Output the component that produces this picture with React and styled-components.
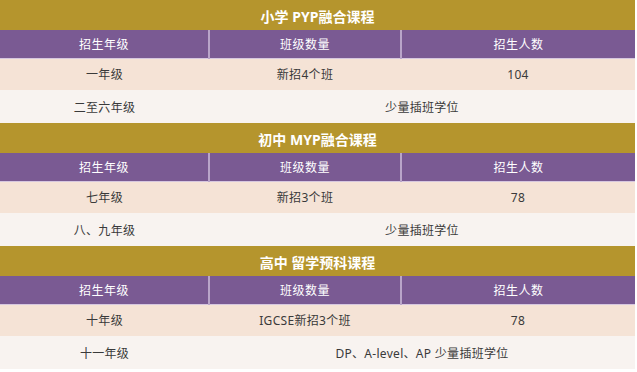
import styled, { createGlobalStyle } from 'styled-components'

const GlobalStyle = createGlobalStyle`
  html, body {
    margin: 0;
    padding: 0;
    background: #ffffff;
  }
  body {
    font-family: 'Noto Sans', 'Noto Sans CJK SC', sans-serif;
  }
`

const sections = [
  {
    title: '小学 PYP融合课程',
    main: ['一年级', '新招4个班', '104'],
    extra: ['二至六年级', '少量插班学位'],
  },
  {
    title: '初中 MYP融合课程',
    main: ['七年级', '新招3个班', '78'],
    extra: ['八、九年级', '少量插班学位'],
  },
  {
    title: '高中 留学预科课程',
    main: ['十年级', 'IGCSE新招3个班', '78'],
    extra: ['十一年级', 'DP、A-level、AP 少量插班学位'],
  },
]

const headers = ['招生年级', '班级数量', '招生人数']

function App() {
  return (
    <>
      <GlobalStyle />
      <Table>
        <colgroup>
          <col style={{ width: 209 }} />
          <col style={{ width: 192 }} />
          <col />
        </colgroup>
        {sections.map((s) => (
          <tbody key={s.title}>
            <TitleRow>
              <td colSpan={3}>{s.title}</td>
            </TitleRow>
            <HeadRow>
              {headers.map((h) => (
                <th key={h}>{h}</th>
              ))}
            </HeadRow>
            <BodyRow $tone='peach'>
              {s.main.map((c, i) => (
                <td key={i}>{c}</td>
              ))}
            </BodyRow>
            <BodyRow $tone='light' $tall>
              <td>{s.extra[0]}</td>
              <td colSpan={2}>{s.extra[1]}</td>
            </BodyRow>
          </tbody>
        ))}
      </Table>
    </>
  )
}

export default App

/////  Style  /////

const Table = styled.table`
  width: 635px;
  table-layout: fixed;
  border-collapse: collapse;
  border-spacing: 0;
  td,
  th {
    padding: 0;
    text-align: center;
    vertical-align: middle;
  }
`

const TitleRow = styled.tr`
  height: 30px;
  background-color: #b5952d;
  td {
    color: #ffffff;
    font-size: 14px;
    font-weight: 700;
    padding-top: 1px;
  }
`

const HeadRow = styled.tr`
  height: 28px;
  background-color: #7a5a93;
  th {
    color: #ffffff;
    font-size: 12px;
    font-weight: 400;
    letter-spacing: 0.5px;
    border-bottom: 1px solid #d6c7df;
    & + th {
      border-left: 2px solid #b9a5c9;
    }
  }
`

const BodyRow = styled.tr`
  height: ${(p) => (p.$tall ? '33px' : '32px')};
  background-color: ${(p) => (p.$tone === 'peach' ? '#f5e3d6' : '#f8f3f0')};
  td {
    color: #3a3a3a;
    font-size: 12px;
    letter-spacing: 0.3px;
  }
`
